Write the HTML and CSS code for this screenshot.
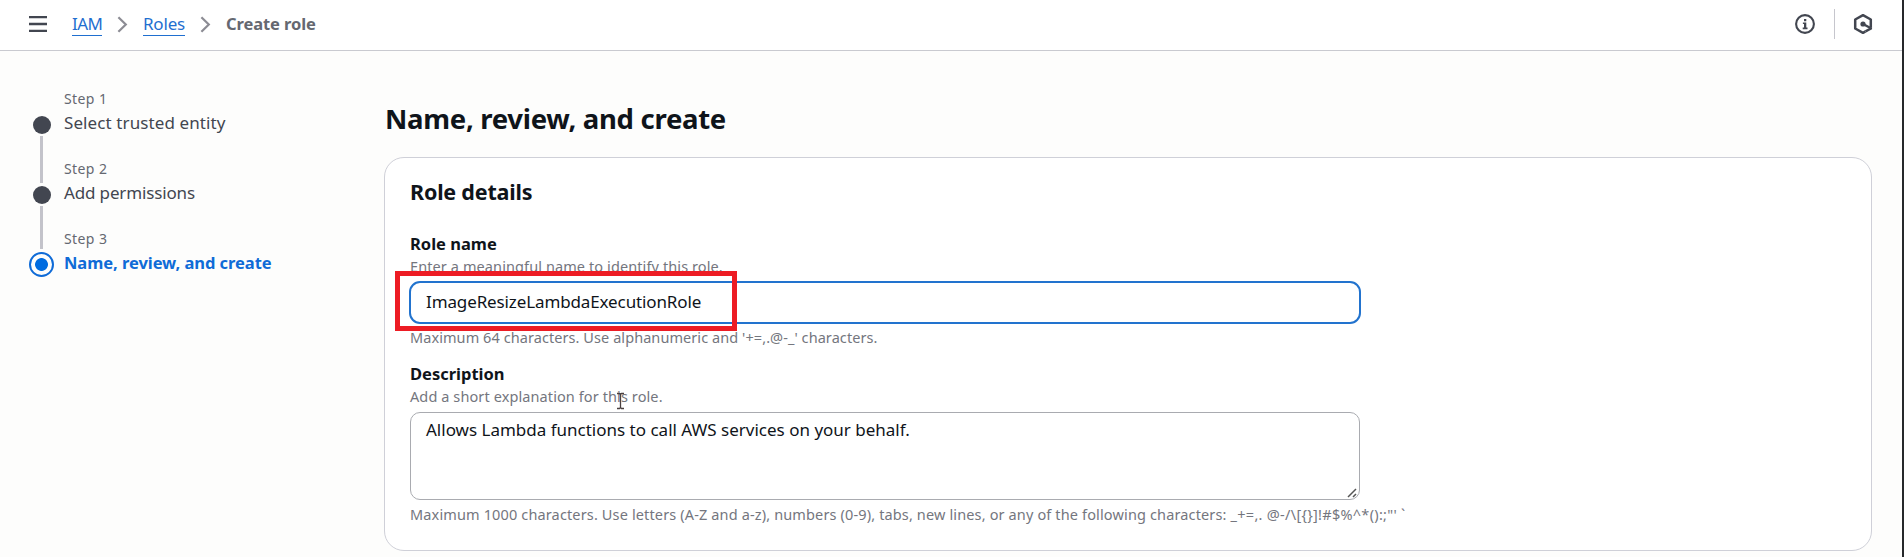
FILE: index.html
```
<!DOCTYPE html>
<html lang="en">
<head>
<meta charset="utf-8">
<title>Create role</title>
<link rel="stylesheet" href="styles.css">
</head>
<body>
<div class="app">
  <header class="topbar">
    <button class="menu" aria-label="Open navigation">
      <svg width="18" height="16" viewBox="0 0 18 16"><path d="M0 1.2h18M0 8h18M0 14.8h18" stroke="#424650" stroke-width="2.3"/></svg>
    </button>
    <nav class="crumbs">
      <a class="crumb-link iam" href="#">IAM</a>
      <svg class="chev" width="11" height="17" viewBox="0 0 11 17"><path d="M1.4 1.2 8.8 8.5 1.4 15.8" fill="none" stroke="#8c8c94" stroke-width="2.2"/></svg>
      <a class="crumb-link roles" href="#">Roles</a>
      <svg class="chev" width="11" height="17" viewBox="0 0 11 17"><path d="M1.4 1.2 8.8 8.5 1.4 15.8" fill="none" stroke="#8c8c94" stroke-width="2.2"/></svg>
      <span class="crumb-current">Create role</span>
    </nav>
    <div class="tools">
      <svg width="20" height="20" viewBox="0 0 20 20"><circle cx="10" cy="10" r="8.9" fill="none" stroke="#424650" stroke-width="2.1"/><path d="M9 5h2.300v2.200H9zM7.900 8.400h3.400v5.200h1.200v1.700H7.700v-1.700H9v-3.600H7.900z" fill="#424650"/></svg>
      <span class="divider"></span>
      <svg width="20" height="22" viewBox="0 0 20 22"><path d="M12.500 18.400 10 19.800 2.200 15.500v-9L10 2.200l7.800 4.300v8.200" fill="none" stroke="#424650" stroke-width="2.500" stroke-linejoin="round"/><path d="M17.800 14.500v1L12.500 18.400" fill="none" stroke="#424650" stroke-width="2.500"/><circle cx="10" cy="11" r="2.600" fill="#424650"/><path d="M10 11l7.500 4" stroke="#424650" stroke-width="2.500"/></svg>
    </div>
  </header>

  <main class="content">
    <ol class="steps">
      <li class="step done">
        <span class="rail"><i class="dot"></i><i class="line"></i></span>
        <span class="step-text"><small>Step 1</small><span class="step-name">Select trusted entity</span></span>
      </li>
      <li class="step done">
        <span class="rail"><i class="dot"></i><i class="line short"></i></span>
        <span class="step-text"><small>Step 2</small><span class="step-name perms">Add permissions</span></span>
      </li>
      <li class="step active">
        <span class="rail"><i class="ring"></i></span>
        <span class="step-text"><small>Step 3</small><span class="step-name">Name, review, and create</span></span>
      </li>
    </ol>

    <section class="page">
      <h1>Name, review, and create</h1>
      <div class="card">
        <h2>Role details</h2>
        <div class="field">
          <label class="label">Role name</label>
          <p class="hint intro">Enter a meaningful name to identify this role.</p>
          <div class="input"><span>ImageResizeLambdaExecutionRole</span><i class="highlight"></i></div>
          <p class="hint">Maximum 64 characters. Use alphanumeric and '+=,.@-_' characters.</p>
        </div>
        <div class="field">
          <label class="label">Description</label>
          <p class="hint intro with-cursor">Add a short explanation for this role.
            <svg class="cursor" width="9" height="18" viewBox="0 0 9 18"><path d="M1 1.500h2.500l1 1 1-1H8M4.500 2.500v13M1 16.500h2.500l1-1 1 1H8" fill="none" stroke="#4a4040" stroke-width="1.300"/></svg>
          </p>
          <div class="textarea">Allows Lambda functions to call AWS services on your behalf.
            <svg class="grip" width="10" height="10" viewBox="0 0 10 10"><path d="M1 9 9 1M6 9l3-3" stroke="#555" stroke-width="1.500"/></svg>
          </div>
          <p class="hint long">Maximum 1000 characters. Use letters (A-Z and a-z), numbers (0-9), tabs, new lines, or any of the following characters: <span class="symbols">_+=,. @-/\[{}]!#$%^*():;"' `</span></p>
        </div>
      </div>
    </section>
  </main>
</div>
</body>
</html>
```
FILE: styles.css
```
* { box-sizing: border-box; }
body {
  margin: 0;
  font: 17px/24px "Noto Sans", sans-serif;
  color: #0f141a;
  background: #fdfdfc;
}
.app {
  height: 557px;
  overflow: hidden;
  border-right: 2px solid #26282b;
}
h1, h2, p, ol { margin: 0; padding: 0; }
svg { display: block; flex: none; }

.topbar {
  height: 51px;
  display: flex;
  align-items: center;
  padding: 0 29px 2px;
  background: #fff;
  border-bottom: 1px solid #c9cad0;
}
.menu { padding: 0; border: 0; background: none; }
.crumbs { display: flex; align-items: center; margin-left: 25px; }
.crumb-link {
  color: #1f6fd0;
  text-decoration: none;
  line-height: 22px;
  border-bottom: 1px solid #1f6fd0;
}
.iam { width: 30px; letter-spacing: -0.6px; }
.roles { width: 42px; letter-spacing: -0.2px; }
.chev { margin: 0 15px; }
.crumb-current { font-size: 16.5px; font-weight: 700; letter-spacing: -0.1px; color: #656871; }
.tools { display: flex; align-items: center; margin-left: auto; }
.divider { width: 1px; height: 30px; margin: 0 18px 0 19px; background: #c6c6cd; }

.content { display: flex; }
.steps {
  width: 384px;
  padding: 36px 0 0 29px;
  list-style: none;
  flex: none;
}
.step { display: flex; height: 70px; }
.rail {
  width: 25px;
  margin-right: 10px;
  padding-top: 29px;
  display: flex;
  flex-direction: column;
  align-items: center;
  flex: none;
}
.dot { width: 18px; height: 18px; border-radius: 50%; background: #424650; flex: none; }
.line { width: 3px; height: 47px; margin-top: 2px; background: #c3c3ca; flex: none; }
.short { height: 43px; }
.ring {
  width: 25px;
  height: 25px;
  margin-top: -4px;
  border: 2px solid #0f6bd7;
  border-radius: 50%;
  background: radial-gradient(circle, #006ce0 6px, transparent 6.8px);
}
.step-text { display: flex; flex-direction: column; color: #424650; white-space: nowrap; }
.step small { font-size: 14px; letter-spacing: 0.4px; color: #656871; }
.step-name { letter-spacing: 0.1px; }
.perms { letter-spacing: -0.15px; }
.active .step-name { font-size: 16.5px; font-weight: 700; color: #0f6bd7; letter-spacing: -0.05px; }

.page { flex: 1; padding: 50px 30px 0 0; }
h1 { font-size: 27.5px; line-height: 36px; font-weight: 700; letter-spacing: -0.29px; padding-left: 1px; }
.card {
  height: 394px;
  margin-top: 20px;
  padding: 20px 25px 0;
  border: 1px solid #cfd0d8;
  border-radius: 20px;
  background: #fff;
}
h2 { font-size: 21.5px; line-height: 28px; font-weight: 700; letter-spacing: -0.2px; margin-bottom: 26px; }
.field + .field { margin-top: 14px; }
.label { display: block; font-size: 16.5px; font-weight: 700; }
.hint {
  font-size: 14.5px;
  line-height: 22px;
  letter-spacing: 0.07px;
  color: #74767e;
  white-space: nowrap;
}
.intro { margin-top: -1px; letter-spacing: 0.1px; }
.long { letter-spacing: 0.14px; }
.symbols { letter-spacing: 0.28px; }
.input {
  position: relative;
  width: 952px;
  height: 43px;
  margin: 4px 0 2px -1px;
  padding: 7px 15px;
  border: 2px solid #2273ce;
  border-radius: 11px;
  letter-spacing: -0.12px;
}
.highlight {
  position: absolute;
  left: -16px;
  top: -12px;
  width: 342px;
  height: 60px;
  border: 5px solid #ed1c24;
}
.with-cursor { position: relative; }
.cursor { position: absolute; left: 206px; top: 7px; }
.textarea {
  position: relative;
  width: 950px;
  height: 88px;
  margin: 5px 0 3px;
  padding: 5px 15px;
  border: 1px solid #a9abb0;
  border-radius: 10px;
}
.grip { position: absolute; right: 2px; bottom: 1px; }
```
